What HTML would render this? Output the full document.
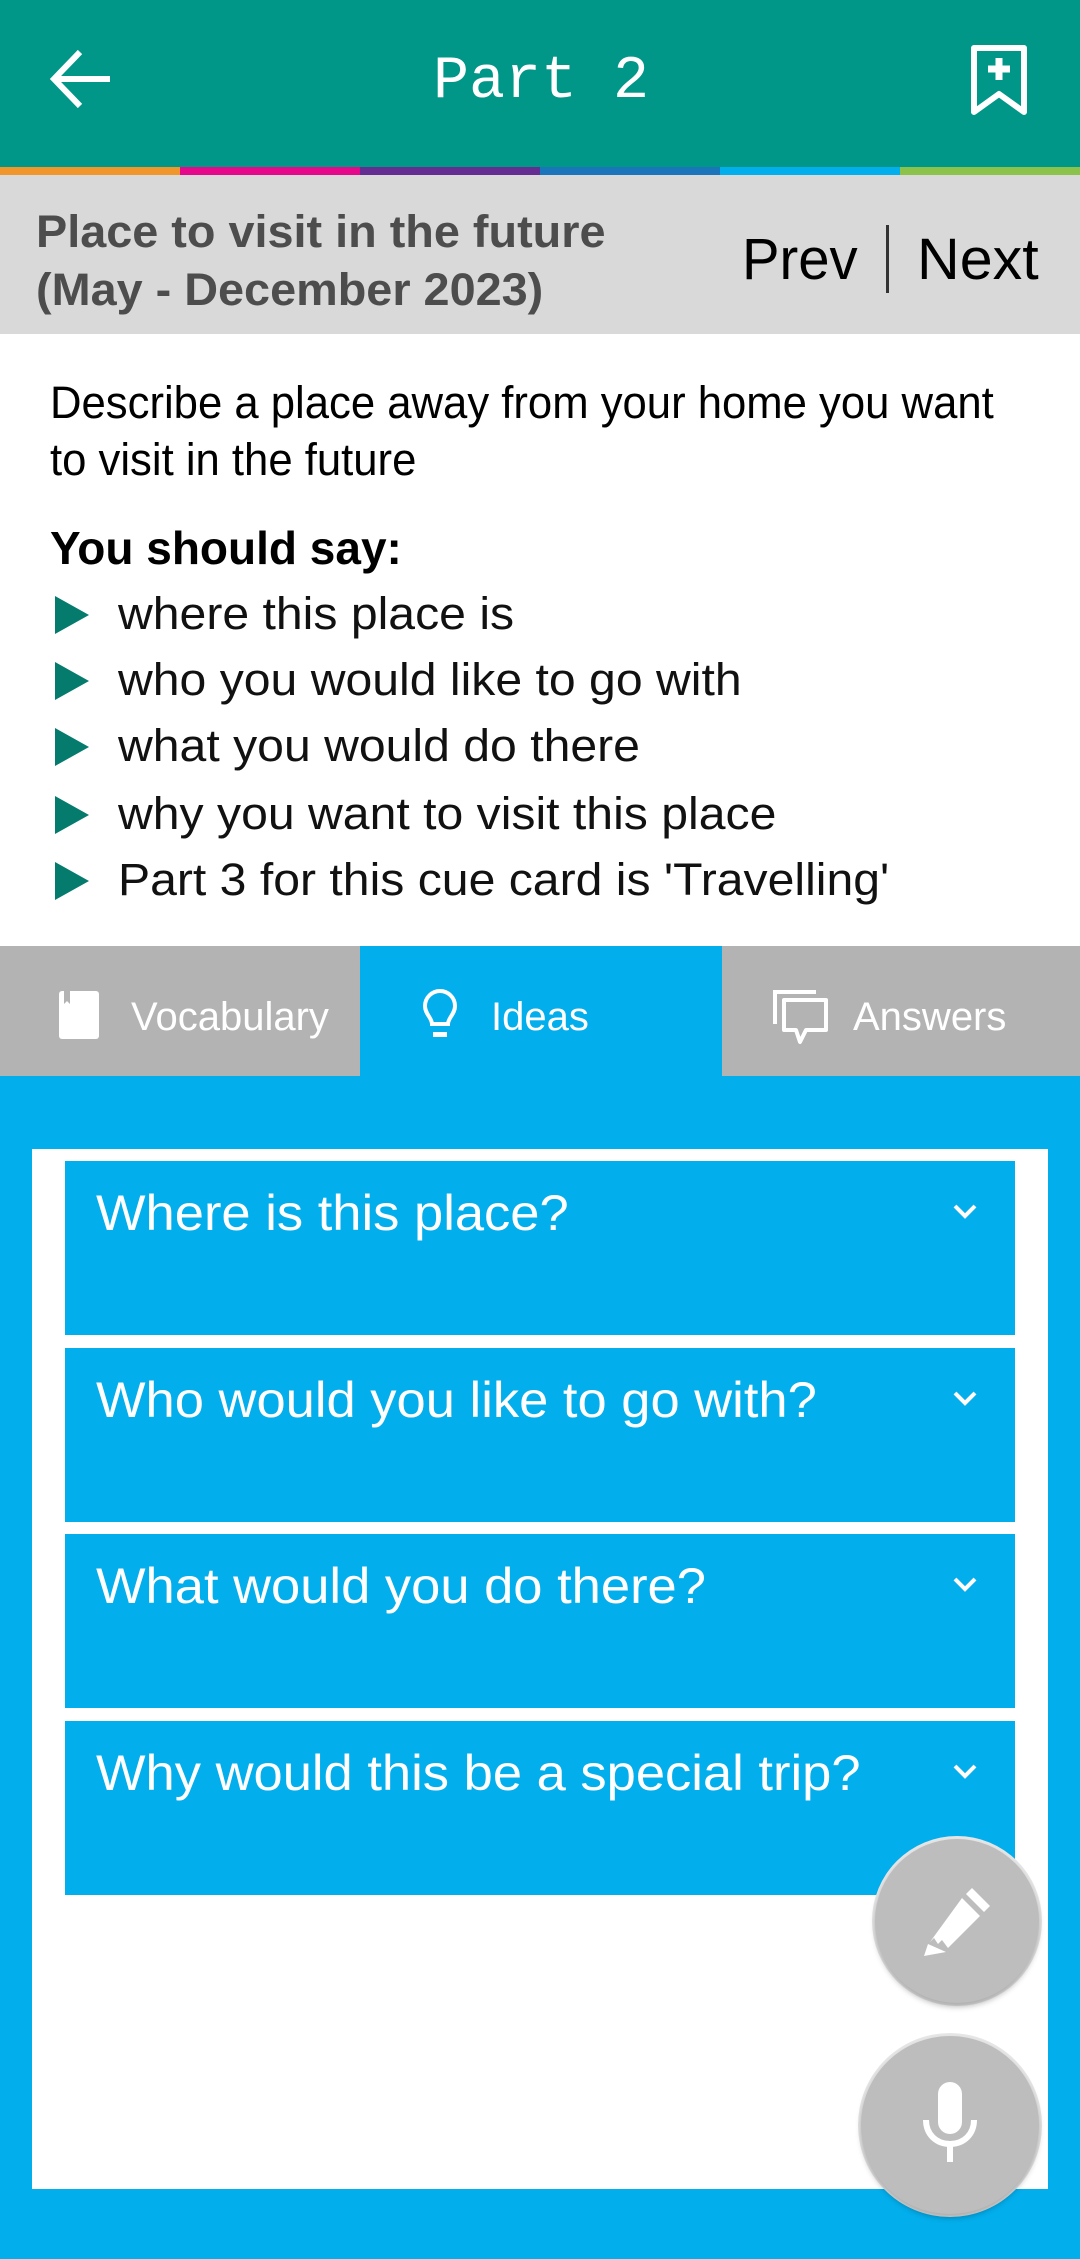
<!DOCTYPE html>
<html><head><meta charset="utf-8"><style>
*{margin:0;padding:0;box-sizing:border-box}
body{width:1080px;height:2259px;overflow:hidden;background:#03aeec;font-family:"Liberation Sans",sans-serif;position:relative}
.abs{position:absolute}
.hdr{left:0;top:0;width:1080px;height:167px;background:#009688}
.bar{top:167px;height:8px}
.gray{left:0;top:175px;width:1080px;height:159px;background:#d9d9d9}
.white{left:0;top:334px;width:1080px;height:612px;background:#fff}
.t{white-space:nowrap}
.li{left:118px;font-size:45px;color:#111;font-weight:300;transform:scaleX(1.07);transform-origin:left}
.tri{left:55px;width:0;height:0;border-left:34px solid #047b6c;border-top:19px solid transparent;border-bottom:19px solid transparent}
.tab{top:946px;height:130px;width:360px;background:#b3b3b3}
.tl{color:#fff;font-size:40px;top:995px}
.card{left:32px;top:1149px;width:1016px;height:1040px;background:#fff}
.item{left:65px;width:950px;height:174px;background:#03aeec}
.it{left:96px;color:#fff;font-size:50px;transform:scaleX(1.05);transform-origin:left}
.fab{border-radius:50%;background:#bdbdbd;box-shadow:0 4px 6px rgba(0,0,0,.25),0 0 0 3px #e6e6e6}
</style></head><body>
<div class="abs hdr"></div>
<svg class="abs" style="left:48px;top:46px" width="70" height="66" viewBox="0 0 70 66"><path d="M62 33H8M32 6L6 33L32 60" fill="none" stroke="#fff" stroke-width="6"/></svg>
<div class="abs t" style="left:433px;top:48px;color:#fff;font-family:'Liberation Mono',monospace;font-size:60px;">Part 2</div>
<svg class="abs" style="left:970px;top:44px" width="58" height="72" viewBox="0 0 58 72"><path d="M4 4H54V68L29 50L4 68Z" fill="none" stroke="#fff" stroke-width="6" stroke-linejoin="round"/><path d="M29 14V36M18 25H40" stroke="#fff" stroke-width="7"/></svg>
<div class="abs bar" style="left:0;width:180px;background:#f0962a"></div>
<div class="abs bar" style="left:180px;width:180px;background:#e5088a"></div>
<div class="abs bar" style="left:360px;width:180px;background:#632d91"></div>
<div class="abs bar" style="left:540px;width:180px;background:#1b75bb"></div>
<div class="abs bar" style="left:720px;width:180px;background:#03aeec"></div>
<div class="abs bar" style="left:900px;width:180px;background:#8bc34a"></div>
<div class="abs gray"></div>
<div class="abs t" style="left:36px;top:203px;font-size:45px;font-weight:bold;color:#4d4d4d;line-height:58px;transform:scaleX(1.04);transform-origin:left">Place to visit in the future<br>(May - December 2023)</div>
<div class="abs t" style="left:742px;top:226px;font-size:58px;color:#000;transform:scaleX(.97);transform-origin:left">Prev</div>
<div class="abs" style="left:886px;top:225px;width:3px;height:68px;background:#333"></div>
<div class="abs t" style="left:917px;top:226px;font-size:58px;color:#000;transform:scaleX(1.02);transform-origin:left">Next</div>
<div class="abs white"></div>
<div class="abs t" style="left:50px;top:374px;font-size:45px;color:#000;line-height:57px;transform:scaleX(.97);transform-origin:left">Describe a place away from your home you want<br>to visit in the future</div>
<div class="abs t" style="left:50px;top:521px;font-size:46px;font-weight:bold;color:#000;transform:scaleX(1.0);transform-origin:left">You should say:</div>
<div class="abs tri" style="top:596px"></div><div class="abs t li" style="top:588px">where this place is</div>
<div class="abs tri" style="top:662px"></div><div class="abs t li" style="top:654px">who you would like to go with</div>
<div class="abs tri" style="top:728px"></div><div class="abs t li" style="top:720px">what you would do there</div>
<div class="abs tri" style="top:796px"></div><div class="abs t li" style="top:788px">why you want to visit this place</div>
<div class="abs tri" style="top:862px"></div><div class="abs t li" style="top:854px">Part 3 for this cue card is 'Travelling'</div>
<div class="abs tab" style="left:0"></div>
<div class="abs tab" style="left:360px;background:#03aeec"></div>
<div class="abs tab" style="left:722px;width:358px"></div>
<svg class="abs" style="left:58px;top:990px" width="42" height="50" viewBox="0 0 42 50"><rect x="1" y="1" width="40" height="48" rx="3" fill="#fff"/><path d="M6 1V14L9 11L12 14V1Z" fill="#b3b3b3"/></svg>
<div class="abs t tl" style="left:131px">Vocabulary</div>
<svg class="abs" style="left:420px;top:988px" width="40" height="56" viewBox="0 0 40 56"><path d="M12 36C12 30 5 26 5 18A15 15 0 0 1 35 18C35 26 28 30 28 36Z" fill="none" stroke="#fff" stroke-width="4"/><rect x="13" y="44" width="14" height="5" fill="#fff"/></svg>
<div class="abs t tl" style="left:491px">Ideas</div>
<svg class="abs" style="left:772px;top:988px" width="58" height="58" viewBox="0 0 58 58"><path d="M3 36V4H44" fill="none" stroke="#fff" stroke-width="4"/><path d="M12 12H54V42H34L28 54L24 42H12Z" fill="none" stroke="#fff" stroke-width="4" stroke-linejoin="round"/></svg>
<div class="abs t tl" style="left:853px">Answers</div>
<div class="abs card"></div>
<div class="abs item" style="top:1161px"></div>
<div class="abs item" style="top:1348px"></div>
<div class="abs item" style="top:1534px"></div>
<div class="abs item" style="top:1721px"></div>
<div class="abs t it" style="top:1184px">Where is this place?</div>
<div class="abs t it" style="top:1371px">Who would you like to go with?</div>
<div class="abs t it" style="top:1557px">What would you do there?</div>
<div class="abs t it" style="top:1744px">Why would this be a special trip?</div>
<svg class="abs" style="left:952px;top:1202px" width="26" height="18" viewBox="0 0 26 18"><path d="M3 4L13 14L23 4" fill="none" stroke="#fff" stroke-width="4"/></svg>
<svg class="abs" style="left:952px;top:1389px" width="26" height="18" viewBox="0 0 26 18"><path d="M3 4L13 14L23 4" fill="none" stroke="#fff" stroke-width="4"/></svg>
<svg class="abs" style="left:952px;top:1575px" width="26" height="18" viewBox="0 0 26 18"><path d="M3 4L13 14L23 4" fill="none" stroke="#fff" stroke-width="4"/></svg>
<svg class="abs" style="left:952px;top:1762px" width="26" height="18" viewBox="0 0 26 18"><path d="M3 4L13 14L23 4" fill="none" stroke="#fff" stroke-width="4"/></svg>
<div class="abs fab" style="left:875px;top:1839px;width:164px;height:164px"></div>
<svg class="abs" style="left:918px;top:1882px" width="78" height="78" viewBox="0 0 78 78"><path d="M54 6L72 24L66 30L48 12Z" fill="#fff"/><path d="M44 16L62 34L30 66L24 58L20 62L16 56L12 60Z" fill="#fff"/><path d="M10 62L28 70L6 74Z" fill="#fff"/></svg>
<div class="abs fab" style="left:861px;top:2036px;width:178px;height:178px"></div>
<svg class="abs" style="left:920px;top:2082px" width="60" height="82" viewBox="0 0 60 82"><rect x="18" y="0" width="24" height="52" rx="12" fill="#fff"/><path d="M6 38C6 52 16 62 30 62C44 62 54 52 54 38" fill="none" stroke="#fff" stroke-width="6"/><rect x="27" y="60" width="6" height="20" fill="#fff"/></svg>
</body></html>
